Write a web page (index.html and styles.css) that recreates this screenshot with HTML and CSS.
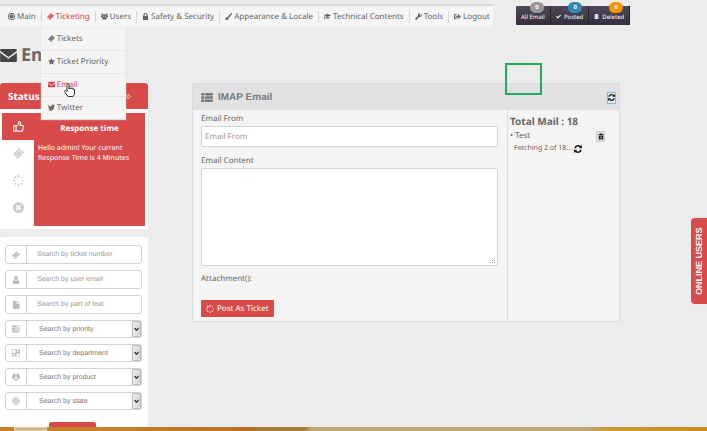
FILE: index.html
```html
<!DOCTYPE html>
<html lang="en">
<head>
<meta charset="utf-8">
<title>Email</title>
<link rel="stylesheet" href="styles.css">
</head>
<body>
<svg class="sprite" aria-hidden="true">
  <symbol id="ticket" viewBox="0 0 16 16"><path fill-rule="evenodd" d="M9.500 0 11 1.500a1.500 1.500 0 0 0 2.200 2.200L16 6 6.500 16l-2-2a1.500 1.500 0 0 0-2.200-2.200L0 9.500zM9.300 3.200 3.200 9.400l3.500 3.500 6.100-6.200zM9.300 4.200l2.600 2.600-5.200 5.200-2.600-2.600z"/></symbol>
  <symbol id="dash" viewBox="0 0 16 16"><path fill-rule="evenodd" d="M8 0a8 8 0 1 0 0 16A8 8 0 0 0 8 0zm0 2a6 6 0 1 1 0 12A6 6 0 0 1 8 2z"/><circle cx="8" cy="8" r="4.600"/></symbol>
  <symbol id="users" viewBox="0 0 18 16"><circle cx="3.500" cy="3" r="2.600"/><circle cx="14.500" cy="3" r="2.600"/><circle cx="9" cy="5.500" r="3.500"/><path d="M0 10V7q0-2 2-2l3 1q0 3 2 4zM18 10V7q0-2-2-2l-3 1q0 3-2 4zM3 14q0-5 3-5.500 3 2 6 0 3 .5 3 5.500 0 2-2 2H5q-2 0-2-2z"/></symbol>
  <symbol id="lock" viewBox="0 0 16 16"><path fill-rule="evenodd" d="M2 7h1V5a5 5 0 0 1 10 0v2h1v9H2zM5.500 7h5V5a2.500 2.500 0 0 0-5 0z"/></symbol>
  <symbol id="brush" viewBox="0 0 16 16"><path d="M15.500.5q1 1 0 2.500L10 10.500 6.500 8 13 1q1.500-1.200 2.500-.5zM5.500 8.800l3.500 2.700q0 4-4.500 4.500Q0 16 0 12q2 1 2.500-.700.5-2.500 3-2.500z"/></symbol>
  <symbol id="cap" viewBox="0 0 18 16"><path d="M9 1 0 5l9 4 9-4zM4 8.500v3.500q5 4 10 0V8.500l-5 2.300zM1 6h1.200v4L3 15H0l1-5z"/></symbol>
  <symbol id="wrench" viewBox="0 0 16 16"><path d="M.7 12.500 7 6.500Q6 3 8.700 1.200 11 0 13.500.8L10.700 3.500l.3 1.700 1.800.3L15.600 3q.8 3-1.400 5-2 1.600-4.700.9l-6 6.500q-1.400 1-2.800-.4-1-1.300 0-2.500z"/></symbol>
  <symbol id="logout" viewBox="0 0 16 16"><path fill-rule="evenodd" d="M6 2v2H3v8h3v2H2q-2 0-2-2V4q0-2 2-2zM5 6h4V2l7 6-7 6v-4H5z"/></symbol>
  <symbol id="star" viewBox="0 0 16 16"><path d="m8 0 2.400 5 5.600.8-4 4 1 5.700L8 12.800l-5 2.700 1-5.700-4-4L5.600 5z"/></symbol>
  <symbol id="mail" viewBox="0 0 18 14"><path d="M0 1q0-1 1-1h16q1 0 1 1v1L9 8.500 0 2zM0 4l9 6.500L18 4v9q0 1-1 1H1q-1 0-1-1z"/></symbol>
  <symbol id="bird" viewBox="0 0 16 14"><path d="M16 2.200 14.300 4Q14.300 9 11 12q-3 2.500-7 2-2.500-.2-4-1.400 2.800.1 4.700-1.400-2.300-.2-3-2.300h1.400Q.700 8 .6 5.500L2 6Q-.3 4 1 1.500q3 3.500 6.700 3.500Q7.500 1.500 9.500.5q2.300-1.200 4 .7l2-.8-1.200 1.900z"/></symbol>
  <symbol id="thumb" viewBox="0 0 16 16"><path class="line" d="M1 7h3.500v8H1zM4.500 8 8 4.500 8.500 1q2.500 0 2.500 2.500L10 6.500h4q1.500.5 1 2l-1 5Q13.500 15 12 15H8l-3.500-1.200"/></symbol>
  <symbol id="spin" viewBox="0 0 16 16"><circle cx="8" cy="1.700" r="1.600"/><circle cx="12.600" cy="3.400" r="1"/><circle cx="14.500" cy="8" r="1.200"/><circle cx="12.600" cy="12.600" r="1.300"/><circle cx="8" cy="14.400" r="1.400"/><circle cx="3.400" cy="12.600" r="1.400"/><circle cx="1.600" cy="8" r="1.500"/><circle cx="3.400" cy="3.400" r="1.700"/></symbol>
  <symbol id="close" viewBox="0 0 16 16"><path fill-rule="evenodd" d="M8 0a8 8 0 1 0 0 16A8 8 0 0 0 8 0zM5.500 4 8 6.500 10.500 4 12 5.500 9.500 8l2.500 2.500-1.500 1.500L8 9.500 5.500 12 4 10.500 6.500 8 4 5.500z"/></symbol>
  <symbol id="user" viewBox="0 0 16 16"><ellipse cx="8" cy="4.500" rx="3.700" ry="4.500"/><path d="M1 14q0-5 3.500-5.500 3.500 2.500 7 0Q15 9 15 14q0 2-2 2H3q-2 0-2-2z"/></symbol>
  <symbol id="file" viewBox="0 0 16 16"><path d="M2 0h7v6h6v10H2zM10 0l5 5h-5z"/></symbol>
  <symbol id="bars" viewBox="0 0 16 16"><path fill-rule="evenodd" d="M0 1h16v4H0zm10 1v2h5V2zM0 6h16v4H0zm6 1v2h9V7zM0 11h16v4H0zm12 1v2h3v-2z"/></symbol>
  <symbol id="dept" viewBox="0 0 16 16"><path fill-rule="evenodd" d="M0 1h16v14H0zm1 1v6h6V2zm8 7v5h6V9zM2 10v3h3v-3zM10 3v3h3V3z"/></symbol>
  <symbol id="product" viewBox="0 0 16 16"><path d="M7 0v8l-5 5Q-1 9 1 4.500 3 1 7 0zM9 0q4 1 6 4.500 2 4.500-1 8.500L9 8zM8 10l4 4q-4 3-8 0z"/></symbol>
  <symbol id="state" viewBox="0 0 16 16"><path class="line" d="M8 1a7 7 0 1 0 0 14A7 7 0 0 0 8 1zM8 0v16M0 8h16M8 4a4 4 0 1 0 0 8 4 4 0 0 0 0-8z"/></symbol>
  <symbol id="list" viewBox="0 0 18 14"><path d="M0 0h5v4H0zm6 0h12v4H6zM0 5h5v4H0zm6 0h12v4H6zM0 10h5v4H0zm6 0h12v4H6z"/></symbol>
  <symbol id="refresh" viewBox="0 0 16 16"><path d="M.5 6.500Q2 0 8 0q3.200 0 5.500 2.200L16 0v6.500H9.500l2-2.200Q10 3 8 3 5 3 3.700 6.500zM15.500 9.500Q14 16 8 16q-3.200 0-5.500-2.200L0 16V9.500h6.500l-2 2.200Q6 13 8 13q3 0 4.300-3.500z"/></symbol>
  <symbol id="trash" viewBox="0 0 16 16"><path fill-rule="evenodd" d="M5 0h6l1 2h3v2H1V2h3zM2 5h12v11H2zm3.500 2v7h1V7zm4 0v7h1V7z"/></symbol>
  <symbol id="check" viewBox="0 0 16 14"><path d="M0 7.500 2.500 5 6 8.500 13.500 1 16 3.500l-10 10z"/></symbol>
  <symbol id="chevrons" viewBox="0 0 16 16"><path class="thick" d="m2 2 6 6-6 6M8 2l6 6-6 6"/></symbol>
  <symbol id="down" viewBox="0 0 8 8"><path class="thick" d="m1 2 3 3 3-3"/></symbol>
</svg>

<header class="topbar">
  <nav class="menu">
    <a href="#"><svg class="ic"><use href="#dash"/></svg>Main</a>
    <div class="has-sub">
      <a href="#" class="active"><svg class="ic"><use href="#ticket"/></svg>Ticketing</a>
      <div class="submenu">
        <a href="#"><svg class="ic"><use href="#ticket"/></svg>Tickets</a>
        <a href="#"><svg class="ic"><use href="#star"/></svg>Ticket Priority</a>
        <a href="#" class="active"><svg class="ic"><use href="#mail"/></svg>Email
          <svg class="pointer" viewBox="0 0 11 14"><path d="M3 8V1.500q0-1 1-1t1 1V6q0-1 1-1t1 1q0-1 1-1t1 1.500q0-.5.800-.5t.7 1V10q0 2-1.500 3.500h-5L1 9.500q-1-1.500 0-2t2 1z"/></svg></a>
        <a href="#"><svg class="ic"><use href="#bird"/></svg>Twitter</a>
      </div>
    </div>
    <a href="#"><svg class="ic"><use href="#users"/></svg>Users</a>
    <a href="#"><svg class="ic"><use href="#lock"/></svg>Safety &amp; Security</a>
    <a href="#"><svg class="ic"><use href="#brush"/></svg>Appearance &amp; Locale</a>
    <a href="#"><svg class="ic"><use href="#cap"/></svg>Technical Contents</a>
    <a href="#"><svg class="ic"><use href="#wrench"/></svg>Tools</a>
    <a href="#"><svg class="ic"><use href="#logout"/></svg>Logout</a>
  </nav>
  <div class="counters">
    <a href="#">All Email<span class="badge grey">0</span></a>
    <a href="#"><svg class="ic"><use href="#check"/></svg>Posted<span class="badge blue">0</span></a>
    <a href="#"><svg class="ic"><use href="#trash"/></svg>Deleted<span class="badge orange">0</span></a>
  </div>
</header>

<h1 class="title"><svg class="title-icon"><use href="#mail"/></svg>Email</h1>

<div class="layout">
  <aside class="sidebar">
    <section class="status">
      <h2>Status<svg class="ic"><use href="#chevrons"/></svg></h2>
      <div class="tabs">
        <div class="tablist">
          <button class="on" aria-label="Response time"><svg><use href="#thumb"/></svg></button>
          <button aria-label="Tickets"><svg><use href="#ticket"/></svg></button>
          <button aria-label="Pending"><svg><use href="#spin"/></svg></button>
          <button aria-label="Closed"><svg><use href="#close"/></svg></button>
        </div>
        <div class="tabpanel">
          <h3>Response time</h3>
          <p>Hello admin! Your current Response Time is 4 Minutes</p>
        </div>
      </div>
    </section>
    <form class="search">
      <div class="field"><label for="s1"><svg><use href="#ticket"/></svg></label><input id="s1" aria-label="Ticket number" placeholder="Search by ticket number"></div>
      <div class="field"><label for="s2"><svg><use href="#user"/></svg></label><input id="s2" aria-label="User email" placeholder="Search by user email"></div>
      <div class="field"><label for="s3"><svg><use href="#file"/></svg></label><input id="s3" aria-label="Text" placeholder="Search by part of text"></div>
      <div class="field pick"><label for="s4"><svg><use href="#bars"/></svg></label><select id="s4" aria-label="Priority"><option>Search by priority</option></select><span class="arrow"><svg><use href="#down"/></svg></span></div>
      <div class="field pick"><label for="s5"><svg><use href="#dept"/></svg></label><select id="s5" aria-label="Department"><option>Search by department</option></select><span class="arrow"><svg><use href="#down"/></svg></span></div>
      <div class="field pick"><label for="s6"><svg><use href="#product"/></svg></label><select id="s6" aria-label="Product"><option>Search by product</option></select><span class="arrow"><svg><use href="#down"/></svg></span></div>
      <div class="field pick"><label for="s7"><svg><use href="#state"/></svg></label><select id="s7" aria-label="State"><option>Search by state</option></select><span class="arrow"><svg><use href="#down"/></svg></span></div>
      <button class="go" aria-label="Search"></button>
    </form>
  </aside>

  <main class="panel">
    <div class="panel-head">
      <h2><svg><use href="#list"/></svg>IMAP Email</h2>
      <button class="reload" aria-label="Refresh"><svg><use href="#refresh"/></svg></button>
      <span class="marker"></span>
    </div>
    <div class="panel-body">
      <form class="compose">
        <label for="from">Email From</label>
        <input id="from" placeholder="Email From">
        <label for="content">Email Content</label>
        <textarea id="content"></textarea>
        <p>Attachment():</p>
        <button type="button"><svg><use href="#spin"/></svg>Post As Ticket</button>
      </form>
      <aside class="mails">
        <h3>Total Mail : 18</h3>
        <div class="mail"><span>Test</span><button aria-label="Delete"><svg><use href="#trash"/></svg></button></div>
        <p>Fetching 2 of 18....<svg><use href="#refresh"/></svg></p>
      </aside>
    </div>
  </main>
</div>

<button class="online">ONLINE USERS</button>
<div class="taskbar"><span></span></div>
</body>
</html>
```
FILE: styles.css
```css
* { box-sizing: border-box; }
body {
  margin: 0;
  height: 100vh;
  overflow: hidden;
  background: #ececec;
  color: #666;
  font: 8px/12px "Noto Sans", "Open Sans", sans-serif;
  text-rendering: geometricPrecision;
}
h1, h2, h3, p { margin: 0; }
a { color: inherit; text-decoration: none; }
svg { fill: currentColor; flex: none; }
button, input, select, textarea { font: inherit; color: inherit; margin: 0; text-rendering: inherit; }
button { padding: 0; border: 0; display: flex; align-items: center; justify-content: center; }
.sprite { position: absolute; width: 0; height: 0; }
.line, .thick { fill: none; stroke: currentColor; stroke-width: 1.500; }
.thick { stroke-width: 2; }
.ic { width: 7px; height: 7px; margin-right: 2px; }

.topbar { display: flex; align-items: flex-start; gap: 23px; padding-top: 4px; }
.menu {
  display: flex;
  align-items: center;
  width: 493px;
  height: 23px;
  background: #f5f5f5;
  border-top: 2px solid #d6d6d6;
}
.menu a { display: flex; align-items: center; white-space: nowrap; }
.menu > a, .has-sub { padding: 0 5px; border-left: 1px solid #d8d8d8; }
.menu > a:first-child { border-left: 0; padding-left: 8px; }
.active { color: #d9434a; }
.has-sub { position: relative; }
.submenu {
  position: absolute;
  z-index: 3;
  top: 17px;
  left: -1px;
  width: 85px;
  background: #f4f4f4;
  box-shadow: 0 1px 1px #ddd;
}
.submenu a { height: 23px; padding-left: 7px; border-bottom: 1px solid #e8e8e8; position: relative; }
.submenu a:last-child { border-bottom: 0; height: 22px; }
.pointer {
  position: absolute;
  left: 23px;
  top: 9px;
  width: 11px;
  height: 14px;
  fill: #fff;
  stroke: #333;
}
.counters {
  display: flex;
  margin-top: 2px;
  background: linear-gradient(#4f4858, #332e3d);
  color: #fff;
  font-size: 6px;
  border-radius: 1px;
}
.counters a {
  display: flex;
  align-items: center;
  height: 19px;
  padding: 2px 5px 0;
  border-right: 1px solid #2a2533;
  position: relative;
}
.counters .ic { width: 5px; height: 5px; margin-right: 3px; }
.badge {
  position: absolute;
  top: -4px;
  right: 6px;
  width: 14px;
  height: 11px;
  line-height: 11px;
  border-radius: 6px;
  text-align: center;
  font-weight: 700;
}
.grey { background: #999; }
.blue { background: #2f87b3; }
.orange { background: #f89406; }

.title {
  display: flex;
  align-items: center;
  gap: 4px;
  height: 56px;
  font-size: 18px;
  color: #666;
}
.title-icon { width: 17px; height: 13px; color: #444; }

.layout { display: flex; align-items: flex-start; gap: 44px; padding-right: 87px; }
.sidebar { width: 148px; }
.status { background: #fff; }
.status h2 {
  display: flex;
  align-items: center;
  justify-content: space-between;
  height: 26px;
  padding: 0 15px 0 8px;
  background: #d94b4b;
  color: #fff;
  font-size: 10px;
  border-radius: 3px 3px 0 0;
}
.tabs { display: flex; padding: 4px 3px 3px 2px; }
.tablist { width: 32px; color: #ccc; }
.tablist button { width: 32px; height: 27px; background: none; }
.tablist svg { width: 11px; height: 11px; }
.tablist .on { background: #d94b4b; color: #fff; }
.tabpanel { flex: 1; min-height: 113px; padding: 10px 4px; background: #d94b4b; color: #fff; }
.tabpanel h3 { font-size: 8px; text-align: center; }
.tabpanel p { margin: 9px -4px 0 0; font-size: 7px; line-height: 10px; }

.search {
  display: flex;
  flex-direction: column;
  gap: 6px;
  margin-top: 8px;
  padding: 8px 6px 0 5px;
  background: #fff;
  border-radius: 2px;
  font: 7px/12px "Liberation Sans", sans-serif;
  color: #777;
}
.field { display: flex; height: 19px; border: 1px solid #d3d3d3; border-radius: 3px; }
.pick { height: 18px; }
.field label {
  display: flex;
  align-items: center;
  justify-content: center;
  width: 21px;
  border-right: 1px solid #d3d3d3;
  color: #bbb;
}
.field svg { width: 8px; height: 8px; }
.field input, .field select { flex: 1; min-width: 0; border: 0; background: none; padding: 1px 0 0 10px; }
.field select { appearance: none; padding-left: 12px; }
.field .arrow {
  display: flex;
  align-items: center;
  justify-content: center;
  width: 9px;
  border: 1px solid #bbb;
  border-radius: 1px;
  background: linear-gradient(90deg, #eee, #d2d2d2);
  color: #222;
  pointer-events: none;
}
.field .arrow svg { width: 5px; height: 5px; }
::placeholder { color: #999; opacity: 1; }
.go { align-self: center; width: 47px; height: 20px; margin: 6px 0 0 -3px; background: #d94b4b; border-radius: 2px; }

.panel { flex: 1; min-width: 0; border: 1px solid #dcdcdc; background: #f4f4f4; }
.panel-head {
  display: flex;
  align-items: center;
  justify-content: space-between;
  height: 26px;
  padding: 1px 3px 0 8px;
  background: #e1e1e3;
  position: relative;
}
.panel-head h2 { display: flex; align-items: center; gap: 5px; font: bold 10px/14px "Liberation Sans", sans-serif; color: #777; }
.panel-head h2 svg { width: 12px; height: 9px; }
.reload { width: 9px; height: 12px; border: 1px solid #8bb4e0; background: #e4edf7; color: #222; }
.reload svg { width: 7px; height: 7px; }
.marker {
  position: absolute;
  z-index: 4;
  right: 77px;
  top: -21px;
  width: 37px;
  height: 32px;
  border: 2px solid #22ab60;
}
.panel-body { display: flex; }
.compose { flex: 1; min-width: 0; padding: 3px 9px 4px 8px; }
.compose label { display: block; height: 13px; }
.compose input, .compose textarea { display: block; width: 100%; border: 1px solid #d5d5d5; border-radius: 2px; background: #fff; }
.compose input { height: 21px; padding: 0 3px; margin-bottom: 8px; }
.compose textarea { height: 98px; }
.compose textarea::-webkit-resizer {
  background:
    linear-gradient(#aaa, #aaa) right 2px bottom 2px / 1px 1px no-repeat,
    linear-gradient(#aaa, #aaa) right 4px bottom 2px / 1px 1px no-repeat,
    linear-gradient(#aaa, #aaa) right 6px bottom 2px / 1px 1px no-repeat,
    linear-gradient(#aaa, #aaa) right 2px bottom 4px / 1px 1px no-repeat,
    linear-gradient(#aaa, #aaa) right 4px bottom 4px / 1px 1px no-repeat,
    linear-gradient(#aaa, #aaa) right 2px bottom 6px / 1px 1px no-repeat;
}
.compose p { margin: 7px 0 15px; }
.compose button { gap: 3px; height: 17px; padding: 0 5px; background: #d94b4b; color: #fff; border-radius: 1px; }
.compose button svg { width: 8px; height: 8px; }
.mails { width: 112px; padding: 3px 14px 0 2px; border-left: 1px solid #dcdcdc; }
.mails h3 { font-size: 10px; line-height: 16px; color: #666; }
.mail { display: flex; justify-content: space-between; align-items: center; height: 14px; }
.mail span::before { content: "• "; }
.mail button { width: 9px; height: 11px; border: 1px solid #ccc; background: #e4e4e4; color: #222; }
.mail button svg { width: 6px; height: 7px; }
.mails p { display: flex; align-items: center; padding-left: 4px; font-size: 7px; }
.mails p svg { width: 8px; height: 8px; color: #222; }

.online {
  position: fixed;
  right: 0;
  top: 218px;
  width: 16px;
  height: 86px;
  writing-mode: vertical-rl;
  transform: rotate(180deg);
  border-radius: 0 4px 4px 0;
  background: #d94b4b;
  color: #fff;
  font: bold 9px/16px "Liberation Sans", sans-serif;
}
.taskbar {
  position: fixed;
  z-index: 5;
  bottom: 0;
  left: 0;
  right: 0;
  height: 4px;
  background: linear-gradient(90deg, #c5822a 0 15%, #b96e25 35%, #a5793a 37% 43%, #bea773 44% 83%, #c99a38 86%, #c68e1d);
}
.taskbar span { display: block; width: 33px; height: 4px; margin-left: 14px; background: #d0b287; border: 1px solid #e2cda6; }
```
